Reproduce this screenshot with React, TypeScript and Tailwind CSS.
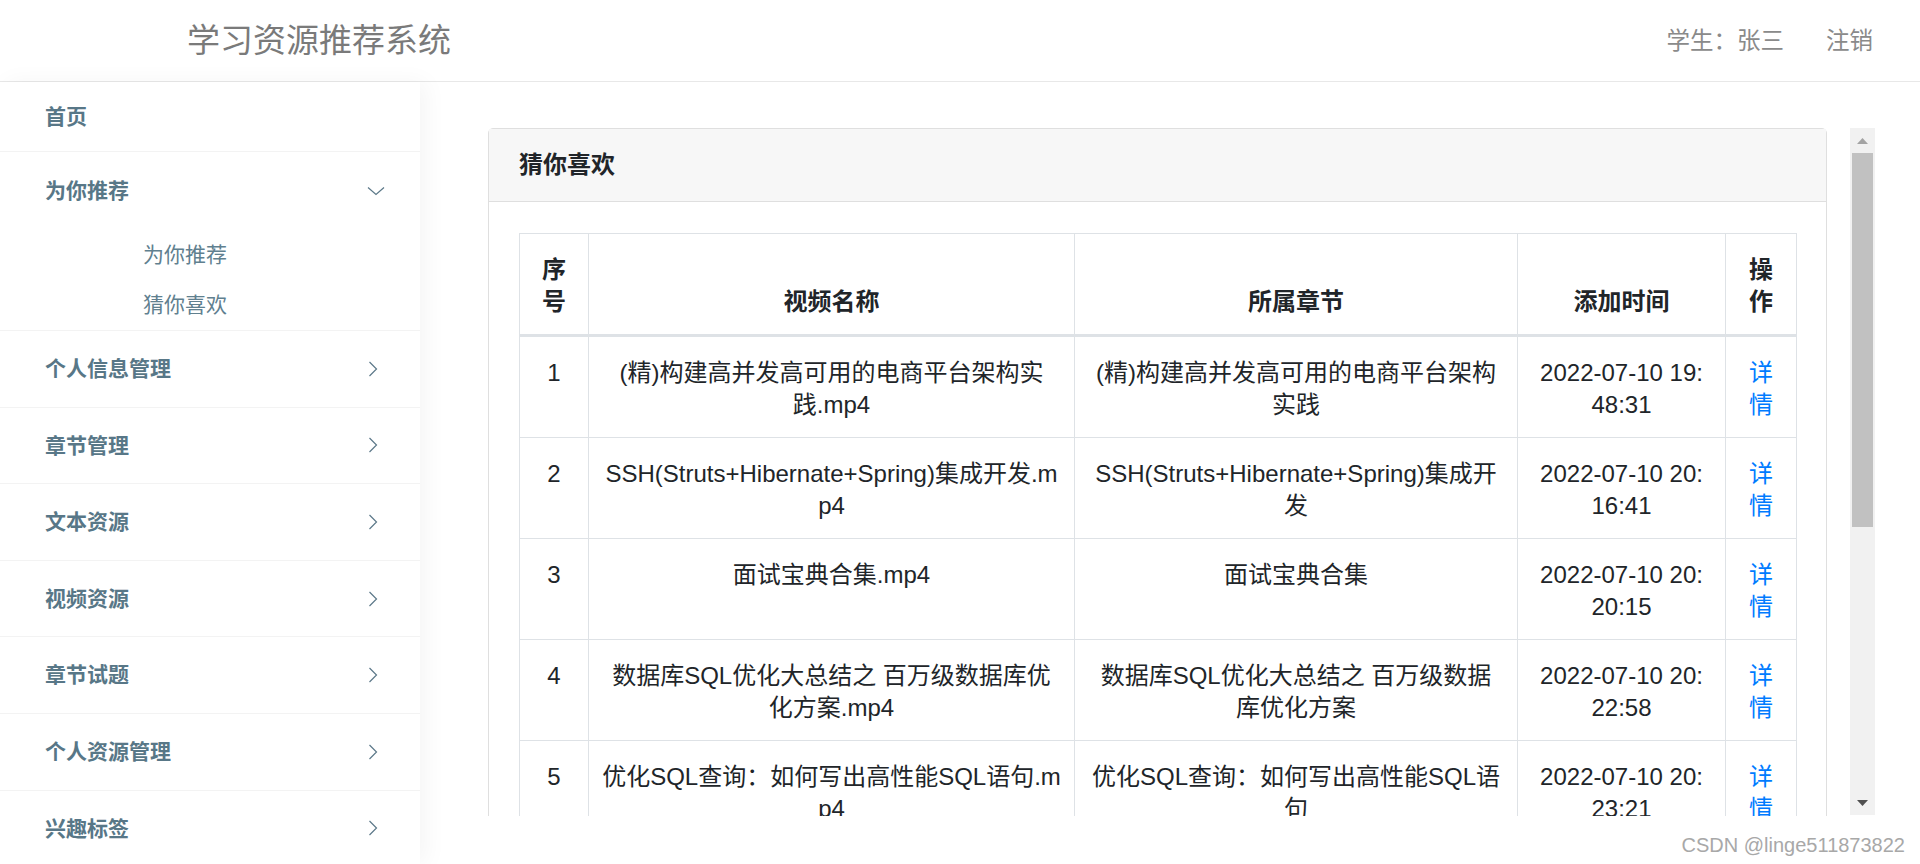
import React from "react";

const FONT = "font-['Liberation_Sans','Noto_Sans_CJK_SC',sans-serif]";

function ChevronRight() {
  return (
    <svg width="10" height="16" viewBox="0 0 10 16" fill="none">
      <polyline points="1.5,1 8.5,8 1.5,15" stroke="#5b7888" strokeWidth="1.2" strokeLinejoin="miter" />
    </svg>
  );
}

function ChevronDown() {
  return (
    <svg width="18" height="10" viewBox="0 0 18 10" fill="none">
      <polyline points="1,1.5 9,8.5 17,1.5" stroke="#5b7888" strokeWidth="1.2" strokeLinejoin="miter" />
    </svg>
  );
}

const menuItems = ["个人信息管理", "章节管理", "文本资源", "视频资源", "章节试题", "个人资源管理", "兴趣标签"];

type Row = {
  no: string;
  name: string[];
  chapter: string[];
  time: string[];
};

const rows: Row[] = [
  {
    no: "1",
    name: ["(精)构建高并发高可用的电商平台架构实", "践.mp4"],
    chapter: ["(精)构建高并发高可用的电商平台架构", "实践"],
    time: ["2022-07-10 19:", "48:31"],
  },
  {
    no: "2",
    name: ["SSH(Struts+Hibernate+Spring)集成开发.m", "p4"],
    chapter: ["SSH(Struts+Hibernate+Spring)集成开", "发"],
    time: ["2022-07-10 20:", "16:41"],
  },
  {
    no: "3",
    name: ["面试宝典合集.mp4"],
    chapter: ["面试宝典合集"],
    time: ["2022-07-10 20:", "20:15"],
  },
  {
    no: "4",
    name: ["数据库SQL优化大总结之 百万级数据库优", "化方案.mp4"],
    chapter: ["数据库SQL优化大总结之 百万级数据", "库优化方案"],
    time: ["2022-07-10 20:", "22:58"],
  },
  {
    no: "5",
    name: ["优化SQL查询：如何写出高性能SQL语句.m", "p4"],
    chapter: ["优化SQL查询：如何写出高性能SQL语", "句"],
    time: ["2022-07-10 20:", "23:21"],
  },
];

function Lines({ lines, className = "" }: { lines: string[]; className?: string }) {
  return (
    <>
      {lines.map((l, i) => (
        <div key={i} className={"whitespace-pre " + className}>
          {l}
        </div>
      ))}
    </>
  );
}

export default function App() {
  return (
    <div className={`${FONT} relative h-[864px] w-[1920px] overflow-hidden bg-white`}>
      {/* Header */}
      <header className="flex h-[82px] items-center justify-between border-b border-[#e8e8e8] pl-[187px] pr-[47px]">
        <div className="text-[33px] leading-none text-[#7a7a7a]">学习资源推荐系统</div>
        <div className="flex items-center gap-[42px] pt-[2px] text-[23.5px] leading-none text-[#8a8a8a]">
          <span>学生：张三</span>
          <span>注销</span>
        </div>
      </header>

      <div className="flex h-[782px]">
        {/* Sidebar */}
        <aside className="relative z-10 w-[420px] shrink-0 bg-white shadow-[6px_0_22px_rgba(0,0,0,0.045)]">
          <div className="flex h-[70px] items-center border-b border-[#f3f3f3] pl-[45px] text-[21px] font-bold text-[#587787]">
            首页
          </div>
          <div className="border-b border-[#f3f3f3]">
            <div className="flex h-[78px] items-center justify-between pl-[45px] pr-[35px] text-[21px] font-bold text-[#587787]">
              <span>为你推荐</span>
              <ChevronDown />
            </div>
            <div className="flex h-[50px] items-center pl-[143px] text-[21px] text-[#60808f]">为你推荐</div>
            <div className="flex h-[50px] items-center pl-[143px] text-[21px] text-[#60808f]">猜你喜欢</div>
          </div>
          {menuItems.map((m) => (
            <div
              key={m}
              className="flex h-[76.6px] items-center justify-between border-b border-[#f3f3f3] pl-[45px] pr-[42px] text-[21px] font-bold text-[#587787]"
            >
              <span>{m}</span>
              <ChevronRight />
            </div>
          ))}
        </aside>

        {/* Main */}
        <main className="flex-1 pl-[68px] pr-[45px] pt-[46px]">
          <div className="flex h-[688px] gap-[23px]">
            <div className="h-full w-[1339px] overflow-hidden">
              <div className="rounded-[5px] border border-[#dfdfdf] bg-white">
                <div className="flex h-[73px] items-center border-b border-[#dfdfdf] bg-[#f7f7f7] pl-[30px] text-[24px] font-bold text-[#212529]">
                  猜你喜欢
                </div>
                <div className="px-[30px] pb-[30px] pt-[31px]">
                  <table className="w-full table-fixed border-collapse text-[24px] leading-[32px] text-[#212529]">
                    <colgroup>
                      <col className="w-[69px]" />
                      <col className="w-[486px]" />
                      <col className="w-[443px]" />
                      <col className="w-[208px]" />
                      <col className="w-[71px]" />
                    </colgroup>
                    <thead>
                      <tr>
                        <th className="border border-b-[3px] border-[#dee2e6] px-0 pb-[16px] pt-[20px] align-bottom font-bold">
                          <div>序</div>
                          <div>号</div>
                        </th>
                        <th className="border border-b-[3px] border-[#dee2e6] pb-[16px] pt-[20px] align-bottom font-bold">视频名称</th>
                        <th className="border border-b-[3px] border-[#dee2e6] pb-[16px] pt-[20px] align-bottom font-bold">所属章节</th>
                        <th className="border border-b-[3px] border-[#dee2e6] pb-[16px] pt-[20px] align-bottom font-bold">添加时间</th>
                        <th className="border border-b-[3px] border-[#dee2e6] px-0 pb-[16px] pt-[20px] align-bottom font-bold">
                          <div>操</div>
                          <div>作</div>
                        </th>
                      </tr>
                    </thead>
                    <tbody>
                      {rows.map((r) => (
                        <tr key={r.no}>
                          <td className="border border-[#dee2e6] pb-[16px] pt-[20px] text-center align-top">{r.no}</td>
                          <td className="border border-[#dee2e6] pb-[16px] pt-[20px] text-center align-top">
                            <Lines lines={r.name} />
                          </td>
                          <td className="border border-[#dee2e6] pb-[16px] pt-[20px] text-center align-top">
                            <Lines lines={r.chapter} />
                          </td>
                          <td className="border border-[#dee2e6] pb-[16px] pt-[20px] text-center align-top">
                            <Lines lines={r.time} />
                          </td>
                          <td className="border border-[#dee2e6] pb-[16px] pt-[20px] text-center align-top text-[#007bff]">
                            <div>详</div>
                            <div>情</div>
                          </td>
                        </tr>
                      ))}
                    </tbody>
                  </table>
                </div>
              </div>
            </div>

            {/* Scrollbar */}
            <div className="flex h-[687px] w-[25px] shrink-0 flex-col bg-[#f1f1f1]">
              <div className="flex h-[25px] items-center justify-center">
                <svg width="11" height="6" viewBox="0 0 11 6">
                  <polygon points="0,6 5.5,0 11,6" fill="#a3a3a3" />
                </svg>
              </div>
              <div className="mx-[2px] h-[374px] bg-[#c1c1c1]" />
              <div className="flex-1" />
              <div className="flex h-[25px] items-center justify-center">
                <svg width="11" height="6" viewBox="0 0 11 6">
                  <polygon points="0,0 11,0 5.5,6" fill="#505050" />
                </svg>
              </div>
            </div>
          </div>
        </main>
      </div>

      <div className="absolute bottom-[9px] right-[15px] text-[20px] leading-[20px] text-[#a8a8a8]">
        CSDN @linge511873822
      </div>
    </div>
  );
}
